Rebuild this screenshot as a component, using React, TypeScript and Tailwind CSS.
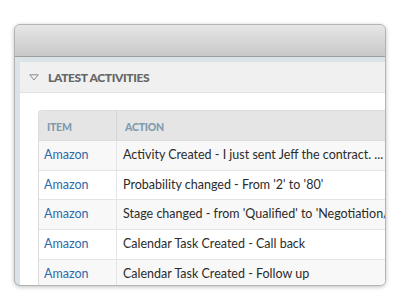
import React from "react";

const rows = [
  "Activity Created - I just sent Jeff the contract. ...",
  "Probability changed - From '2' to '80'",
  "Stage changed - from 'Qualified' to 'Negotiation/Review'",
  "Calendar Task Created - Call back",
  "Calendar Task Created - Follow up",
];

export default function App() {
  return (
    <div className="w-[400px] h-[300px] bg-white overflow-hidden pt-[24px] pl-[14px]" style={{ fontFamily: "Lato, 'Open Sans', sans-serif" }}>
      <div className="w-[372px] h-[262px] rounded-[6px] border border-[#b4b4b4] overflow-hidden flex flex-col shadow-[0_1px_4px_rgba(0,0,0,0.25)] bg-[#dae3e8]">
        <div className="h-[32px] shrink-0 bg-gradient-to-b from-[#e6e6e6] to-[#c8c8c8] border-b border-[#9e9e9e]"></div>
        <div className="flex-1 pl-[5px] pt-[5px] min-h-0">
          <div className="h-full bg-white flex flex-col overflow-hidden rounded-tl-[2px]">
            <div className="h-[31px] shrink-0 bg-[#f0f0f0] border-b border-[#e2e2e2] flex items-center pl-[9px] gap-[9px] pt-[1px]">
              <svg width="10" height="7" viewBox="0 0 10 7">
                <path d="M0.8 0.8 L9.2 0.8 L5 6 Z" fill="none" stroke="#8a8a8a" strokeWidth="1" />
              </svg>
              <span className="text-[12px] font-black text-[#666666] tracking-[-0.35px] leading-none">LATEST ACTIVITIES</span>
            </div>
            <div className="pl-[18px] pt-[17px]">
              <div className="w-[420px] rounded-tl-[4px] border-l border-t border-[#dcdcdc] overflow-hidden">
                <div className="flex h-[30px] bg-[#e5e5e5] border-b border-[#dcdcdc] text-[10.5px] font-black text-[#7f9bb0] tracking-[-0.2px]">
                  <div className="w-[78px] border-r border-[#d4d4d4] flex items-center pl-[8px] pt-[5px]">ITEM</div>
                  <div className="flex-1 flex items-center pl-[8px] pt-[5px]">ACTION</div>
                </div>
                {rows.map((r, i) => (
                  <div key={i} className={`flex h-[29.7px] border-b border-[#e4e4e4] text-[12.5px] ${i % 2 === 0 ? "bg-[#f8f8f8]" : "bg-white"}`}>
                    <div className="w-[78px] border-r border-[#e4e4e4] flex items-center pl-[5px] text-[#2d6aa8]">Amazon</div>
                    <div className="flex-1 flex items-center pl-[6px] text-[#2b2b2b] whitespace-nowrap">{r}</div>
                  </div>
                ))}
              </div>
            </div>
          </div>
        </div>
      </div>
    </div>
  );
}
